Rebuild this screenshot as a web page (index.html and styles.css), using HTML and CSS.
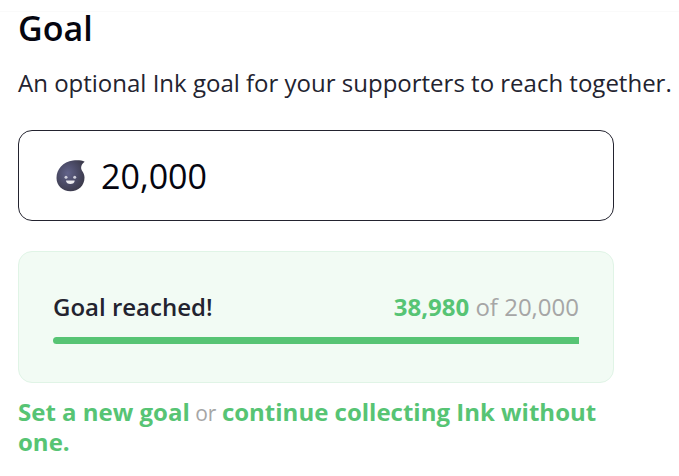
FILE: index.html
```
<!DOCTYPE html>
<html lang="en">
<head>
    <meta charset="utf-8">
    <meta name="viewport" content="width=device-width, initial-scale=1">
    <title>Goal</title>
    <link rel="stylesheet" href="styles.css">
</head>
<body>
    <main class="goal">
        <h1 class="goal-title">Goal</h1>
        <label class="goal-hint" for="goal-amount">An optional Ink goal for your supporters to reach together.</label>

        <div class="goal-field">
            <svg class="ink-icon" viewBox="0 0 30 32" aria-hidden="true">
                <defs>
                    <radialGradient id="ink-body" cx="0.4" cy="0.42" r="0.62">
                        <stop offset="0" stop-color="#62638a"/>
                        <stop offset="0.55" stop-color="#4c4c68"/>
                        <stop offset="1" stop-color="#3c3b4c"/>
                    </radialGradient>
                </defs>
                <path fill="url(#ink-body)" d="M29.700 1.800C26.200 4.200 25.400 7.500 26.900 10.500C28.600 13 29.500 15 29.500 17.500C29.500 25.500 23.500 31.300 15.500 31.300C7.500 31.300 1.500 25.500 1.500 18C1.500 9 8 2 18 .5C22.500 0 27 .3 29.700 1.800Z"/>
                <circle cx="11" cy="17.200" r="1.500" fill="#d0d0dc"/>
                <circle cx="19.700" cy="17.200" r="1.500" fill="#d0d0dc"/>
                <path fill="#ececf0" d="M11 20.500H19.700C19.900 25.300 10.900 25.300 11 20.500Z"/>
            </svg>
            <input class="goal-input" id="goal-amount" type="text" inputmode="numeric" value="20,000">
        </div>

        <section class="progress-card">
            <div class="progress-head">
                <span class="progress-label">Goal reached!</span>
                <span class="progress-count"><strong>38,980</strong> of 20,000</span>
            </div>
            <div class="progress-track">
                <div class="progress-bar" style="width: 100%"></div>
            </div>
        </section>

        <p class="goal-actions"><a href="#new-goal">Set a new goal</a> or <a href="#continue">continue collecting Ink without one.</a></p>
    </main>
</body>
</html>
```

FILE: styles.css
```
* {
    box-sizing: border-box;
}
body {
    margin: 0;
    padding-top: 11px;
    background-color: #fff;
    color: #23232f;
    font-family: "Open Sans", "Noto Sans", sans-serif;
    font-size: 24px;
    line-height: 30px;
}
.goal {
    padding: 0 65px 0 18px;
    border-top: 1px solid #fafafa;
}
.goal-title {
    margin: 0;
    color: #05050f;
    font-size: 34px;
    font-weight: 600;
    line-height: 32px;
}
.goal-hint {
    display: block;
    margin-top: 24px;
    white-space: nowrap;
}
.goal-field {
    display: flex;
    align-items: center;
    gap: 16px;
    margin-top: 32px;
    padding: 0 36px;
    height: 91px;
    border: 1px solid #23232f;
    border-radius: 14px;
}
.ink-icon {
    flex: none;
    width: 30px;
    height: 32px;
}
.goal-input {
    flex: 1;
    min-width: 0;
    padding: 0;
    border: none;
    outline: none;
    background: none;
    color: #05050f;
    font-family: inherit;
    font-size: 34px;
    line-height: 48px;
}
.progress-card {
    margin-top: 30px;
    padding: 40px 34px 38px;
    border: 1px solid #e0f4e6;
    border-radius: 14px;
    background-color: #f2fbf4;
}
.progress-head {
    display: flex;
    justify-content: space-between;
}
.progress-label {
    font-weight: 600;
}
.progress-count {
    color: #a6a6a6;
}
.progress-count strong {
    color: #57c474;
    font-weight: 700;
}
.progress-track {
    margin-top: 15px;
    height: 7px;
    border-radius: 4px 0 0 4px;
    background-color: #dcf2e3;
    overflow: hidden;
}
.progress-bar {
    height: 100%;
    background-color: #57c474;
}
.goal-actions {
    margin: 14px 0 0;
    color: #a6a6a6;
    font-size: 21px;
    line-height: 24px;
}
.goal-actions a {
    color: #57c474;
    font-size: 24px;
    font-weight: 700;
    line-height: 30px;
    text-decoration: none;
}
```
